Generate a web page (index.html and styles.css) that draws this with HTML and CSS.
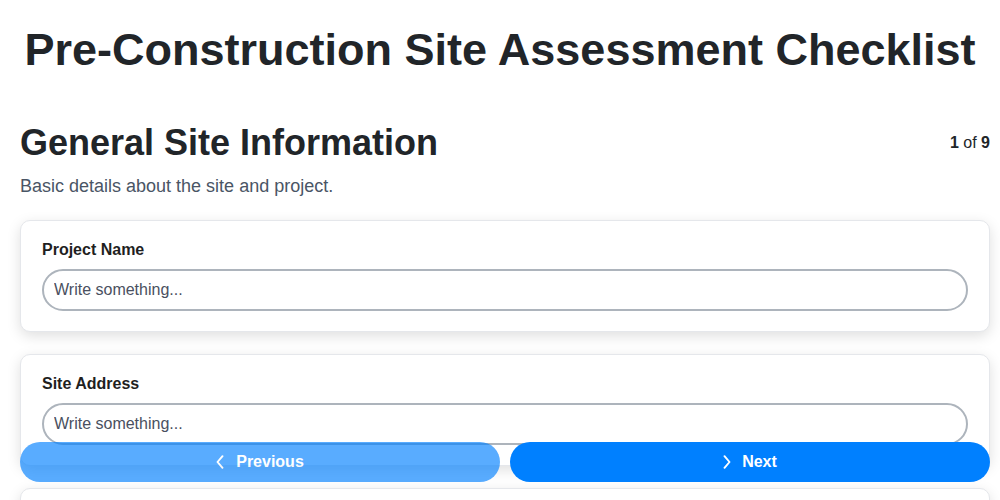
FILE: index.html
```html
<!DOCTYPE html>
<html lang="en">
<head>
<meta charset="utf-8">
<title>Pre-Construction Site Assessment Checklist</title>
<link rel="stylesheet" href="styles.css">
</head>
<body>
<h1 class="title">Pre-Construction Site Assessment Checklist</h1>
<div class="page">
  <div class="section-head">
    <h2 class="section-title">General Site Information</h2>
    <div class="counter"><b>1</b> of <b>9</b></div>
  </div>
  <p class="section-desc">Basic details about the site and project.</p>
  <div class="cards">
    <div class="card">
      <label class="label">Project Name</label>
      <input class="input" type="text" placeholder="Write something...">
    </div>
    <div class="card">
      <label class="label">Site Address</label>
      <input class="input" type="text" placeholder="Write something...">
    </div>
    <div class="card">
      <label class="label">Site Contact</label>
      <input class="input" type="text" placeholder="Write something...">
    </div>
  </div>
</div>
<div class="nav">
  <button class="btn btn-prev" type="button">
    <svg class="chev" viewBox="0 0 8 14" width="8" height="14"><path d="M6.5 1.2 L1.5 7 L6.5 12.8" fill="none" stroke="currentColor" stroke-width="1.9" stroke-linecap="round" stroke-linejoin="round"/></svg>
    <span>Previous</span>
  </button>
  <button class="btn btn-next" type="button">
    <svg class="chev" viewBox="0 0 8 14" width="8" height="14"><path d="M1.5 1.2 L6.5 7 L1.5 12.8" fill="none" stroke="currentColor" stroke-width="1.9" stroke-linecap="round" stroke-linejoin="round"/></svg>
    <span>Next</span>
  </button>
</div>
</body>
</html>
```

FILE: styles.css
```css
* { box-sizing: border-box; }
html, body { margin: 0; padding: 0; background: #ffffff; }
body {
  font-family: "Liberation Sans", Arial, sans-serif;
  color: #212529;
}
.title {
  margin: 0;
  padding-top: 24px;
  font-size: 45px;
  line-height: 52px;
  font-weight: 700;
  text-align: center;
  white-space: nowrap;
  color: #212529;
}
.page {
  padding: 0 10px 80px 20px;
}
.section-head {
  display: flex;
  justify-content: space-between;
  align-items: center;
  margin-top: 46px;
}
.section-title {
  margin: 0;
  font-size: 36px;
  line-height: 42px;
  font-weight: 700;
  color: #212529;
}
.counter {
  font-size: 16px;
  color: #212529;
}
.counter b { font-weight: 700; }
.section-desc {
  margin: 11px 0 0 0;
  font-size: 18px;
  line-height: 22px;
  color: #4a5565;
}
.cards {
  display: flex;
  flex-direction: column;
  gap: 22px;
  margin-top: 23px;
}
.card {
  background: #fff;
  border: 1px solid #e5e7eb;
  border-radius: 10px;
  padding: 19px 21px 20px 21px;
  box-shadow: 0 4px 14px rgba(0, 0, 0, 0.13);
  display: flex;
  flex-direction: column;
}
.label {
  font-size: 16px;
  line-height: 19px;
  font-weight: 700;
  color: #1f1f1f;
  margin-bottom: 10px;
}
.input {
  height: 42px;
  border: 2px solid #adb4bc;
  border-radius: 21px;
  padding: 0 10px;
  font-family: "Liberation Sans", Arial, sans-serif;
  font-size: 16px;
  color: #212529;
  background: #fff;
  outline: none;
}
.input::placeholder { color: #4a5060; opacity: 1; }
.nav {
  position: fixed;
  left: 20px;
  right: 10px;
  bottom: 18px;
  display: flex;
  gap: 10px;
}
.btn {
  flex: 1;
  height: 40px;
  border: none;
  border-radius: 20px;
  background: #0080ff;
  color: #fff;
  font-family: "Liberation Sans", Arial, sans-serif;
  font-size: 16px;
  font-weight: 700;
  display: flex;
  align-items: center;
  justify-content: center;
  gap: 12px;
  cursor: pointer;
}
.btn-prev { opacity: 0.65; }
.btn-next { gap: 11px; }
.chev { display: block; }
```
